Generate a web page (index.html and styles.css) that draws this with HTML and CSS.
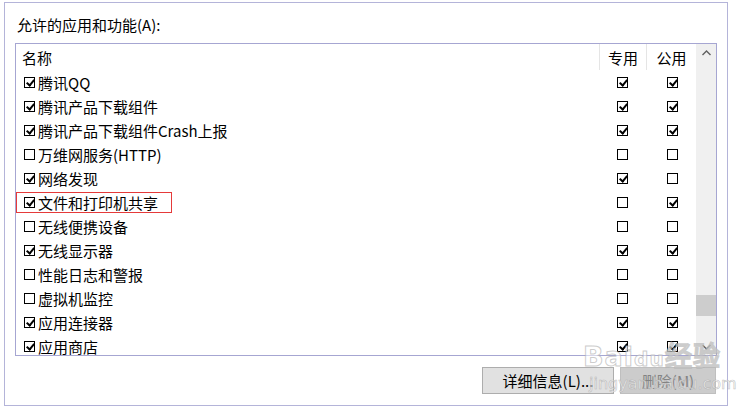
FILE: index.html
```html
<!DOCTYPE html>
<html lang="zh-CN">
<head>
<meta charset="utf-8">
<link rel="stylesheet" href="styles.css">
</head>
<body>
<div class="frame">
  <div class="title">允许的应用和功能(A):</div>
  <div class="listbox">
    <div class="table">
      <div class="row head">
        <div class="c-name">名称</div>
        <div class="c-col sep">专用</div>
        <div class="c-col sep">公用</div>
      </div>
      <div class="row"><div class="c-name"><span class="lcb on"></span>腾讯QQ</div><div class="c-col"><span class="cb on"></span></div><div class="c-col"><span class="cb on"></span></div></div>
      <div class="row"><div class="c-name"><span class="lcb on"></span>腾讯产品下载组件</div><div class="c-col"><span class="cb on"></span></div><div class="c-col"><span class="cb on"></span></div></div>
      <div class="row"><div class="c-name"><span class="lcb on"></span>腾讯产品下载组件Crash上报</div><div class="c-col"><span class="cb on"></span></div><div class="c-col"><span class="cb on"></span></div></div>
      <div class="row"><div class="c-name"><span class="lcb"></span>万维网服务(HTTP)</div><div class="c-col"><span class="cb"></span></div><div class="c-col"><span class="cb"></span></div></div>
      <div class="row"><div class="c-name"><span class="lcb on"></span>网络发现</div><div class="c-col"><span class="cb on"></span></div><div class="c-col"><span class="cb"></span></div></div>
      <div class="row"><div class="c-name"><span class="mark"><span class="lcb on"></span>文件和打印机共享</span></div><div class="c-col"><span class="cb"></span></div><div class="c-col"><span class="cb on"></span></div></div>
      <div class="row"><div class="c-name"><span class="lcb"></span>无线便携设备</div><div class="c-col"><span class="cb"></span></div><div class="c-col"><span class="cb"></span></div></div>
      <div class="row"><div class="c-name"><span class="lcb on"></span>无线显示器</div><div class="c-col"><span class="cb on"></span></div><div class="c-col"><span class="cb on"></span></div></div>
      <div class="row"><div class="c-name"><span class="lcb"></span>性能日志和警报</div><div class="c-col"><span class="cb"></span></div><div class="c-col"><span class="cb"></span></div></div>
      <div class="row"><div class="c-name"><span class="lcb"></span>虚拟机监控</div><div class="c-col"><span class="cb"></span></div><div class="c-col"><span class="cb"></span></div></div>
      <div class="row"><div class="c-name"><span class="lcb on"></span>应用连接器</div><div class="c-col"><span class="cb on"></span></div><div class="c-col"><span class="cb on"></span></div></div>
      <div class="row"><div class="c-name"><span class="lcb on"></span>应用商店</div><div class="c-col"><span class="cb on"></span></div><div class="c-col"><span class="cb on"></span></div></div>
    </div>
    <div class="scrollbar">
      <div class="sb-btn"><svg width="9" height="6" viewBox="0 0 9 6"><path d="M0.5 5 L4.5 1 L8.5 5" fill="none" stroke="#606060" stroke-width="1.4"/></svg></div>
      <div class="sb-track"><div class="sb-thumb"></div></div>
      <div class="sb-btn"><svg width="9" height="6" viewBox="0 0 9 6"><path d="M0.5 1 L4.5 5 L8.5 1" fill="none" stroke="#606060" stroke-width="1.4"/></svg></div>
    </div>
  </div>
  <div class="buttons">
    <button class="btn details">详细信息(L)...</button>
    <button class="btn disabled">删除(M)</button>
  </div>
  <div class="watermark">
    <div class="wm-big">Bai<span class="paw">du</span>经验</div>
    <div class="wm-small">jingyan.baidu.com</div>
  </div>
</div>
</body>
</html>
```

FILE: styles.css
```css
* { box-sizing: border-box; }
html, body { margin: 0; padding: 0; background: #fff; }
body {
  font-family: "Noto Sans CJK SC", "Noto Sans", sans-serif;
  font-size: 15px;
  color: #000;
  width: 753px;
  height: 409px;
  overflow: hidden;
}
.frame {
  position: relative;
  margin: 2px 0 0 4px;
  width: 724px;
  height: 404px;
  border: 1px solid #b4b4d9;
  padding: 12px 10px 0 10px;
}
.title {
  height: 20px;
  line-height: 20px;
  padding-left: 2px;
}
.listbox {
  margin-top: 8px;
  width: 702px;
  height: 313px;
  border: 1px solid #a6a6d2;
  display: flex;
  overflow: hidden;
}
.table {
  width: 680px;
  display: flex;
  flex-direction: column;
  overflow: hidden;
}
.row {
  display: flex;
  height: 24px;
  flex: none;
  align-items: center;
}
.row.head { height: 26px; }
.c-name {
  width: 583px;
  padding-left: 8px;
  display: flex;
  align-items: center;
  height: 100%;
  white-space: nowrap;
}
.head .c-name { padding-left: 6px; }
.c-col {
  display: flex;
  align-items: center;
  justify-content: center;
  height: 100%;
}
.c-col:nth-child(2) { width: 47px; }
.c-col:nth-child(3) { width: 50px; padding-left: 3px; }
.head .c-col:nth-child(3) { padding-left: 0; }
.c-col.sep { border-left: 1px solid #e5e5e5; }
.lcb {
  width: 11px;
  height: 11px;
  border: 1px solid #000;
  margin-right: 3px;
  flex: none;
  position: relative;
}
.cb {
  width: 11px;
  height: 11px;
  border: 1px solid #000;
  flex: none;
  position: relative;
}
.lcb.on::after, .cb.on::after {
  content: "";
  position: absolute;
  left: 3px;
  top: 0px;
  width: 3px;
  height: 6px;
  border-right: 2px solid #000;
  border-bottom: 2px solid #000;
  transform: rotate(40deg);
}
.mark {
  display: inline-flex;
  align-items: center;
  height: 21px;
  border: 1px solid #e53a3a;
  margin-left: -8px;
  padding: 0 13px 0 7px;
}
.scrollbar {
  width: 20px;
  background: #f0f0f0;
  display: flex;
  flex-direction: column;
}
.sb-btn {
  height: 17px;
  display: flex;
  align-items: center;
  justify-content: center;
}
.sb-track { flex: 1; }
.sb-thumb {
  margin-top: 234px;
  height: 21px;
  background: #cdcdcd;
}
.buttons {
  margin-top: 11px;
  width: 702px;
  display: flex;
  justify-content: flex-end;
  gap: 6px;
  padding-right: 1px;
}
.btn {
  height: 27px;
  font-family: "Noto Sans CJK SC", "Noto Sans", sans-serif;
  font-size: 15px;
  line-height: 1;
  padding: 0;
}
.details {
  width: 132px;
  background: #e1e1e1;
  border: 1px solid #adadad;
  color: #000;
}
.disabled {
  width: 96px;
  background: #cccccc;
  border: 1px solid #bfbfbf;
  color: #838383;
}
.watermark {
  position: absolute;
  left: 578px;
  top: 338px;
  width: 140px;
  pointer-events: none;
  font-family: "DejaVu Sans", sans-serif;
}
.wm-big {
  font-size: 27px;
  font-weight: bold;
  line-height: 32px;
  color: rgba(255,255,255,0.55);
  -webkit-text-stroke: 1px rgba(170,170,170,0.6);
  letter-spacing: 1px;
}
.paw { font-size: 20px; }
.wm-small {
  font-size: 16px;
  line-height: 18px;
  color: rgba(255,255,255,0.6);
  -webkit-text-stroke: 0.6px rgba(160,160,160,0.65);
  padding-left: 6px;
}
```
